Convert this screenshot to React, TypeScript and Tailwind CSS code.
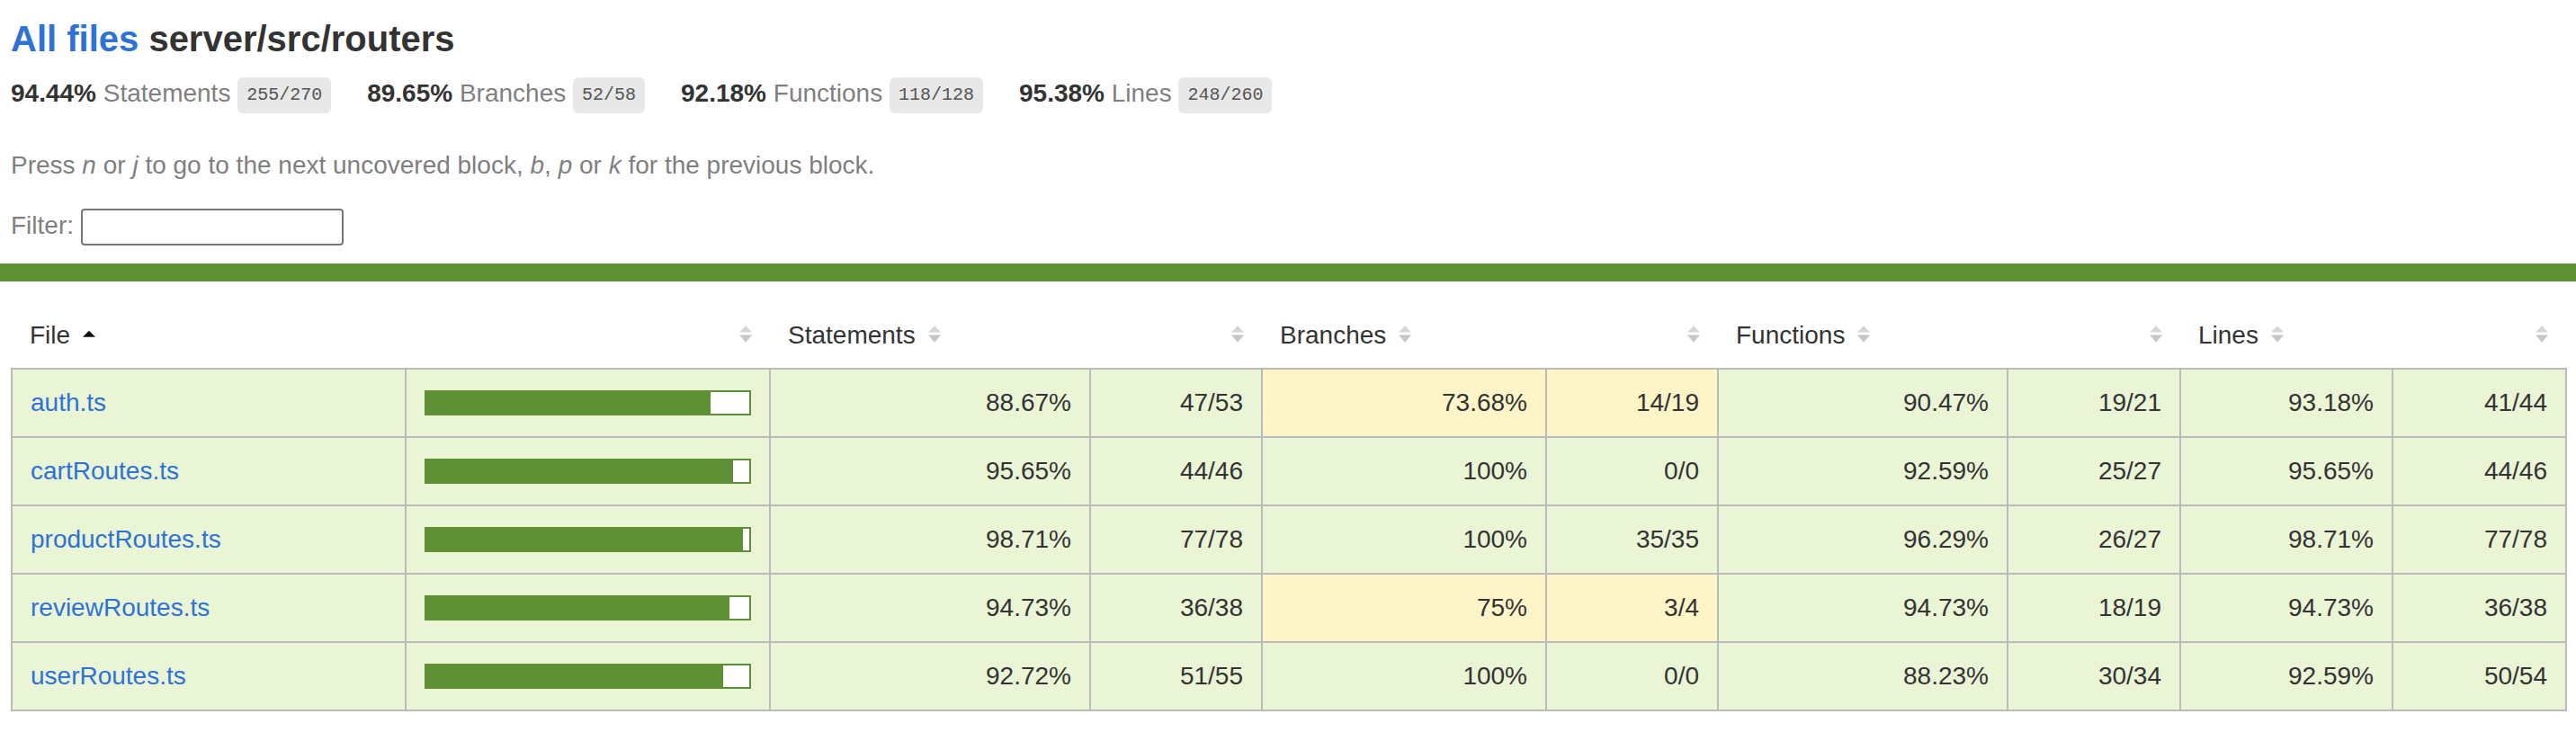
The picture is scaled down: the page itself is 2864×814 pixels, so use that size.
import React from "react";

type Level = "high" | "medium";

type Metric = { pct: string; abs: string; level: Level };

type Row = {
  file: string;
  fill: number;
  statements: Metric;
  branches: Metric;
  functions: Metric;
  lines: Metric;
};

const m = (pct: string, abs: string, level: Level = "high"): Metric => ({ pct, abs, level });

const rows: Row[] = [
  {
    file: "auth.ts",
    fill: 88,
    statements: m("88.67%", "47/53"),
    branches: m("73.68%", "14/19", "medium"),
    functions: m("90.47%", "19/21"),
    lines: m("93.18%", "41/44"),
  },
  {
    file: "cartRoutes.ts",
    fill: 95,
    statements: m("95.65%", "44/46"),
    branches: m("100%", "0/0"),
    functions: m("92.59%", "25/27"),
    lines: m("95.65%", "44/46"),
  },
  {
    file: "productRoutes.ts",
    fill: 98,
    statements: m("98.71%", "77/78"),
    branches: m("100%", "35/35"),
    functions: m("96.29%", "26/27"),
    lines: m("98.71%", "77/78"),
  },
  {
    file: "reviewRoutes.ts",
    fill: 94,
    statements: m("94.73%", "36/38"),
    branches: m("75%", "3/4", "medium"),
    functions: m("94.73%", "18/19"),
    lines: m("94.73%", "36/38"),
  },
  {
    file: "userRoutes.ts",
    fill: 92,
    statements: m("92.72%", "51/55"),
    branches: m("100%", "0/0"),
    functions: m("88.23%", "30/34"),
    lines: m("92.59%", "50/54"),
  },
];

const summary = [
  { pct: "94.44%", label: "Statements", fraction: "255/270" },
  { pct: "89.65%", label: "Branches", fraction: "52/58" },
  { pct: "92.18%", label: "Functions", fraction: "118/128" },
  { pct: "95.38%", label: "Lines", fraction: "248/260" },
];

const bg = {
  high: "bg-[#e9f5d5]",
  medium: "bg-[#fdf5c8]",
};

function Sorter({ sorted }: { sorted?: boolean }) {
  return (
    <svg
      className="ml-[14px] inline-block h-[20px] w-[14px] align-baseline"
      viewBox="0 0 7 10"
    >
      {sorted ? (
        <polygon points="3.5,2.9 7,6.4 0,6.4" fill="#111" />
      ) : (
        <>
          <polygon points="3.5,0.1 7,3.8 0,3.8" fill="#d6d6d6" />
          <polygon points="0,5.2 7,5.2 3.5,9.4" fill="#c6c6c6" />
        </>
      )}
    </svg>
  );
}

const td = "border-2 border-[#bbb] px-[20px] py-[21px] align-middle leading-[32px]";

function MetricCells({ metric }: { metric: Metric }) {
  return (
    <>
      <td className={`${td} ${bg[metric.level]} text-right`}>{metric.pct}</td>
      <td className={`${td} ${bg[metric.level]} text-right`}>{metric.abs}</td>
    </>
  );
}

export default function App() {
  return (
    <div className="min-h-screen bg-white font-['Liberation_Sans',Arial,sans-serif] text-[28px] text-[#333]">
      <div className="px-[12px] pt-[20px] pb-[20px]">
        <h1 className="text-[40px] font-bold leading-[46px]">
          <a className="text-[#2e72d6]">All files</a> server/src/routers
        </h1>

        <div className="flex pt-[20px] leading-[32px]">
          {summary.map((s) => (
            <div key={s.label} className="mr-[40px] whitespace-nowrap">
              <span className="font-bold">{s.pct} </span>{" "}
              <span className="text-[#7f7f7f]">{s.label}</span>{" "}
              <span className="inline-block rounded-[6px] bg-[#e8e8e8] px-[10px] py-[8px] align-middle font-['Liberation_Mono',monospace] text-[20px] leading-[24px] text-[#555]">
                {s.fraction}
              </span>
            </div>
          ))}
        </div>

        <p className="mt-[42px] leading-[32px] text-[#7f7f7f]">
          Press <em>n</em> or <em>j</em> to go to the next uncovered block, <em>b</em>,{" "}
          <em>p</em> or <em>k</em> for the previous block.
        </p>

        <div className="mt-[32px] flex h-[41px] items-center gap-[8px] text-[#7f7f7f]">
          <span className="pb-[4px] leading-[32px]">Filter:</span>
          <input
            type="search"
            className="h-[41px] w-[292px] rounded-[4px] border-2 border-[#767676] bg-white"
          />
        </div>
      </div>

      <div className="h-[20px] bg-[#5e9135]" />

      <div className="px-[12px] pt-[20px] pb-[20px]">
        <table className="w-full table-fixed border-collapse">
          <colgroup>
            <col className="w-[438px]" />
            <col className="w-[405px]" />
            <col className="w-[356px]" />
            <col className="w-[191px]" />
            <col className="w-[316px]" />
            <col className="w-[191px]" />
            <col className="w-[322px]" />
            <col className="w-[192px]" />
            <col className="w-[236px]" />
            <col className="w-[193px]" />
          </colgroup>
          <thead>
            <tr className="leading-[32px]">
              <th className="whitespace-nowrap px-[20px] pt-[24px] pb-[20px] text-left font-normal">
                File
                <Sorter sorted />
              </th>
              <th className="px-[20px] pt-[24px] pb-[20px] text-right font-normal">
                <Sorter />
              </th>
              {["Statements", "Branches", "Functions", "Lines"].map((h) => (
                <React.Fragment key={h}>
                  <th className="whitespace-nowrap px-[20px] pt-[24px] pb-[20px] text-left font-normal">
                    {h}
                    <Sorter />
                  </th>
                  <th className="px-[20px] pt-[24px] pb-[20px] text-right font-normal">
                    <Sorter />
                  </th>
                </React.Fragment>
              ))}
            </tr>
          </thead>
          <tbody>
            {rows.map((r) => (
              <tr key={r.file}>
                <td className={`${td} ${bg.high} whitespace-nowrap`}>
                  <a className="text-[#2e72d6]">{r.file}</a>
                </td>
                <td className={`${td} ${bg.high}`}>
                  <div className="flex h-[28px] border-2 border-[#5e9135]">
                    <div className="bg-[#5e9135]" style={{ width: `${r.fill}%` }} />
                    <div className="flex-1 bg-white" />
                  </div>
                </td>
                <MetricCells metric={r.statements} />
                <MetricCells metric={r.branches} />
                <MetricCells metric={r.functions} />
                <MetricCells metric={r.lines} />
              </tr>
            ))}
          </tbody>
        </table>
      </div>
    </div>
  );
}
